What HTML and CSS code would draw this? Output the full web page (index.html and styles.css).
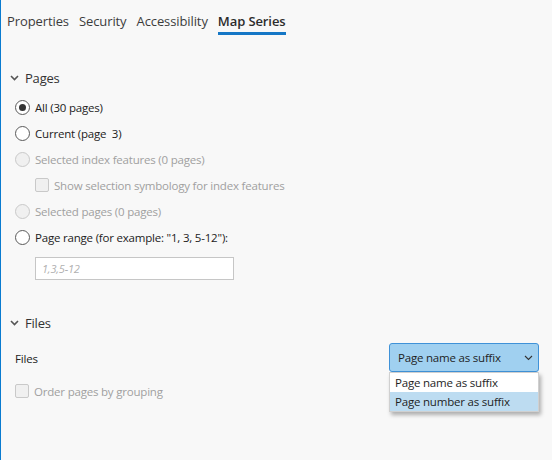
FILE: index.html
```html
<!DOCTYPE html>
<html>
<head>
<meta charset="utf-8">
<link rel="stylesheet" href="styles.css">
</head>
<body>
<div class="pane">
  <nav class="tabs">
    <span class="tab">Properties</span>
    <span class="tab">Security</span>
    <span class="tab">Accessibility</span>
    <span class="tab active">Map Series</span>
  </nav>

  <section class="group pages">
    <div class="group-head">
      <svg class="chev" width="9" height="6" viewBox="0 0 9 6"><path d="M1 1 L4.5 4.5 L8 1" fill="none" stroke="#555" stroke-width="1.6"/></svg>
      <span>Pages</span>
    </div>
    <div class="opt"><span class="radio checked"></span><span>All (30 pages)</span></div>
    <div class="opt"><span class="radio"></span><span>Current (page&nbsp; 3)</span></div>
    <div class="opt disabled"><span class="radio"></span><span>Selected index features (0 pages)</span></div>
    <div class="opt sub disabled"><span class="check"></span><span>Show selection symbology for index features</span></div>
    <div class="opt disabled"><span class="radio"></span><span>Selected pages (0 pages)</span></div>
    <div class="opt"><span class="radio"></span><span>Page range (for example: "1, 3, 5-12"):</span></div>
    <div class="range"><span class="placeholder">1,3,5-12</span></div>
  </section>

  <section class="group files">
    <div class="group-head">
      <svg class="chev" width="9" height="6" viewBox="0 0 9 6"><path d="M1 1 L4.5 4.5 L8 1" fill="none" stroke="#555" stroke-width="1.6"/></svg>
      <span>Files</span>
    </div>
    <div class="files-row">
      <span class="label">Files</span>
      <div class="select-wrap">
        <div class="select">
          <span>Page name as suffix</span>
          <svg width="9" height="6" viewBox="0 0 9 6"><path d="M1 1 L4.5 4.5 L8 1" fill="none" stroke="#333" stroke-width="1.1"/></svg>
        </div>
        <ul class="menu">
          <li>Page name as suffix</li>
          <li class="hl">Page number as suffix</li>
        </ul>
      </div>
    </div>
    <div class="opt flat disabled"><span class="check"></span><span>Order pages by grouping</span></div>
  </section>
</div>
</body>
</html>
```

FILE: styles.css
```css
html, body {
  margin: 0;
  padding: 0;
  background: #f8f8f8;
}
body {
  font-family: "Open Sans", "Noto Sans", sans-serif;
  font-size: 11.5px;
  letter-spacing: -0.2px;
  color: #222;
}
.pane {
  height: 460px;
  box-sizing: border-box;
  border-left: 1px solid #0a7bd0;
  padding-left: 6px;
}
.tabs {
  display: flex;
  gap: 10px;
  padding-top: 12px;
  height: 22px;
  font-size: 13px;
  letter-spacing: -0.1px;
  color: #3c3c3c;
}
.tab {
  line-height: 18px;
  height: 20px;
  box-sizing: border-box;
}
.tab.active {
  font-weight: 600;
  color: #2c2c2c;
  border-bottom: 3px solid #1577c6;
  height: 23px;
}
.group { padding-top: 34px; }
.files { padding-top: 33px; }
.group-head {
  display: flex;
  align-items: center;
  gap: 6px;
  font-size: 13px;
  height: 20px;
  padding-left: 3px;
  color: #333;
  margin-bottom: 6px;
}
.opt {
  display: flex;
  align-items: center;
  gap: 5px;
  height: 26px;
  padding-left: 8px;
}
.opt.sub { padding-left: 28px; }
.opt.flat { padding-left: 8px; }
.opt.disabled { color: #a0a0a0; }
.radio {
  width: 13px;
  height: 13px;
  border: 1px solid #5a5a5a;
  border-radius: 50%;
  background: #fff;
  position: relative;
  flex: none;
}
.radio.checked::after {
  content: "";
  position: absolute;
  left: 3px;
  top: 3px;
  width: 7px;
  height: 7px;
  border-radius: 50%;
  background: #333;
}
.disabled .radio { border-color: #c9c9c9; background: #f0f0f0; }
.check {
  width: 12px;
  height: 12px;
  border: 1px solid #c9c9c9;
  border-radius: 2px;
  background: #f0f0f0;
  flex: none;
}
.range {
  margin: 7px 0 0 28px;
  width: 191px;
  height: 21px;
  border: 1px solid #c6c6c6;
  background: #fff;
  display: flex;
  align-items: center;
  padding-left: 6px;
  box-sizing: content-box;
}
.placeholder { font-style: italic; color: #b0b0b0; font-size: 11px; }
.files-row {
  display: flex;
  align-items: center;
  justify-content: space-between;
  padding: 0 13px 0 8px;
  height: 29px;
  margin-top: 10px;
}
.label { padding-top: 1px; }
.select-wrap { position: relative; width: 150px; }
.select {
  height: 29px;
  box-sizing: border-box;
  border: 1px solid #3f92d8;
  border-radius: 3px;
  background: #a0d0f0;
  display: flex;
  align-items: center;
  justify-content: space-between;
  padding: 0 5px 0 8px;
  color: #1e1e1e;
}
.menu {
  position: absolute;
  left: 0;
  top: 29px;
  width: 150px;
  margin: 0;
  padding: 0;
  list-style: none;
  background: #fff;
  border: 1px solid #d0d0d0;
  box-shadow: 2px 3px 4px rgba(0,0,0,0.3);
  box-sizing: border-box;
}
.menu li {
  height: 19px;
  line-height: 19px;
  padding-left: 5px;
  color: #1e1e1e;
}
.menu li.hl { background: #bddcf1; }
.files .opt.flat { margin-top: 6px; }
```
